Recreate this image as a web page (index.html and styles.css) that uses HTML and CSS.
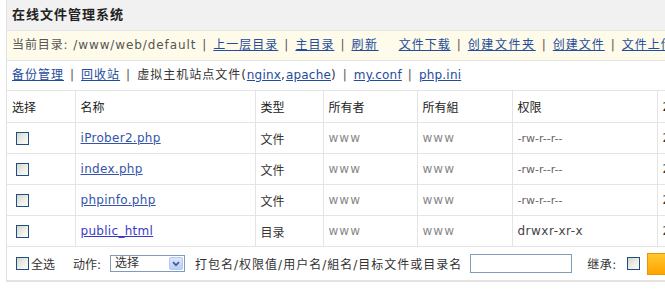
FILE: index.html
```
<!DOCTYPE html>
<html>
<head>
<meta charset="utf-8">
<link rel="stylesheet" href="styles.css">
</head>
<body>
<div class="panel">
  <div class="title">在线文件管理系统</div>
  <div class="bar bar-yellow">
    <span class="muted">当前目录: /www/web/default</span><span class="sep">|</span><a href="#">上一层目录</a><span class="sep">|</span><a href="#">主目录</a><span class="sep">|</span><a href="#" class="wide">刷新</a><a href="#" class="gap">文件下载</a><span class="sep">|</span><a href="#" class="wide">创建文件夹</a><span class="sep">|</span><a href="#">创建文件</a><span class="sep">|</span><a href="#">文件上传</a>
  </div>
  <div class="bar">
    <a href="#">备份管理</a><span class="sep">|</span><a href="#">回收站</a><span class="sep">|</span><span class="dark">虚拟主机站点文件(<a href="#" class="lat">nginx</a>,<a href="#" class="lat">apache</a>)</span><span class="sep">|</span><a href="#" class="lat">my.conf</a><span class="sep">|</span><a href="#" class="lat">php.ini</a>
  </div>
  <table class="files">
    <colgroup>
      <col class="c1"><col class="c2"><col class="c3"><col class="c4"><col class="c5"><col class="c6"><col class="c7">
    </colgroup>
    <thead>
      <tr><th>选择</th><th>名称</th><th>类型</th><th>所有者</th><th>所有組</th><th>权限</th><th>2</th></tr>
    </thead>
    <tbody>
      <tr><td><input type="checkbox" class="cb"></td><td><a href="#" class="file">iProber2.php</a></td><td>文件</td><td class="gray">www</td><td class="gray">www</td><td class="perm">-rw-r--r--</td><td class="date">2</td></tr>
      <tr><td><input type="checkbox" class="cb"></td><td><a href="#" class="file">index.php</a></td><td>文件</td><td class="gray">www</td><td class="gray">www</td><td class="perm">-rw-r--r--</td><td class="date">2</td></tr>
      <tr><td><input type="checkbox" class="cb"></td><td><a href="#" class="file">phpinfo.php</a></td><td>文件</td><td class="gray">www</td><td class="gray">www</td><td class="perm">-rw-r--r--</td><td class="date">2</td></tr>
      <tr><td><input type="checkbox" class="cb"></td><td><a href="#" class="file dir">public_html</a></td><td>目录</td><td class="gray">www</td><td class="gray">www</td><td class="perm dark">drwxr-xr-x</td><td class="date">2</td></tr>
      <tr class="foot">
        <td colspan="7">
          <div class="actions">
            <input type="checkbox" class="cb">
            <span class="all">全选</span>
            <span class="lbl">动作:</span>
            <div class="select"><span class="sel-text">选择</span><span class="sel-btn"><svg width="8" height="6" viewBox="0 0 8 6"><path d="M1 1.2 L4 4.2 L7 1.2" fill="none" stroke="#4a5f8a" stroke-width="1.8"/></svg></span></div>
            <span class="hint">打包名/权限值/用户名/組名/目标文件或目录名</span>
            <input type="text" class="field">
            <span class="inherit">继承:</span>
            <input type="checkbox" class="cb">
            <button class="go">确定执行</button>
          </div>
        </td>
      </tr>
    </tbody>
  </table>
</div>
</body>
</html>
```
FILE: styles.css
```
html, body {
  margin: 0;
  padding: 0;
  overflow: hidden;
  background: #fff;
}
body {
  font-family: "DejaVu Sans", Verdana, "Noto Sans CJK SC", sans-serif;
  font-size: 12px;
  color: #333;
}
.panel {
  margin-left: 6px;
  width: 1000px;
  border-left: 1px solid #e2e2e2;
  border-bottom: 1px solid #e2e2e2;
}
.title {
  height: 30px;
  line-height: 30px;
  padding-left: 5px;
  background: #f1f1f1;
  border-bottom: 1px solid #e6e6e6;
  font-weight: bold;
  font-size: 13px;
  letter-spacing: 1px;
  color: #222;
}
.bar {
  height: 29px;
  line-height: 29px;
  padding-left: 5px;
  border-bottom: 1px solid #e4e4e4;
  letter-spacing: 1px;
  white-space: nowrap;
}
.bar-yellow {
  background: #fffbea;
}
a {
  color: #234c9c;
  text-decoration: underline;
}
.muted {
  color: #555;
  letter-spacing: 0.9px;
}
.dark {
  color: #333;
}
.sep {
  color: #555;
  margin: 0 6px 0 6px;
}
.wide {
  letter-spacing: 1.6px;
}
.gap {
  margin-left: 20px;
}
.lat {
  letter-spacing: 0.2px;
}
.files {
  border-collapse: collapse;
  table-layout: fixed;
  width: 1000px;
}
.c1 { width: 68px; }
.c2 { width: 180px; }
.c3 { width: 68px; }
.c4 { width: 94px; }
.c5 { width: 95px; }
.c6 { width: 145px; }
.c7 { width: 350px; }
.files th, .files td {
  height: 30px;
  padding: 0 0 0 5px;
  border-right: 1px solid #e4e4e4;
  border-bottom: 1px solid #e4e4e4;
  text-align: left;
  vertical-align: middle;
  font-weight: normal;
  white-space: nowrap;
  overflow: hidden;
}
.files th {
  height: 31px;
  color: #222;
}
.file {
  color: #3455a8;
  letter-spacing: 0.3px;
}
.dir {
  color: #3a3ac8;
}
.gray {
  color: #888;
  letter-spacing: 1px;
}
.perm {
  color: #666;
  font-size: 11px;
}
.perm.dark {
  color: #444;
  font-size: 12px;
  letter-spacing: 0.5px;
}
.date {
  color: #333;
}
.cb {
  -webkit-appearance: none;
  appearance: none;
  width: 13px;
  height: 13px;
  margin: 0 0 0 4px;
  padding: 0;
  border: 1px solid #1f4f7f;
  background: linear-gradient(135deg, #d6d6d0 0%, #eeeeea 55%, #fbfbfb 100%);
  vertical-align: middle;
  display: block;
}
.foot td {
  height: 33px;
  border-right: none;
  padding-left: 5px;
}
.actions {
  display: flex;
  align-items: center;
}
.all {
  margin-left: 2px;
}
.lbl {
  margin-left: 18px;
}
.select {
  margin-left: 9px;
  width: 73px;
  height: 15px;
  border: 1px solid #7f9db9;
  background: #fff;
  display: flex;
  align-items: center;
  justify-content: space-between;
}
.sel-text {
  padding-left: 4px;
  line-height: 15px;
}
.sel-btn {
  width: 14px;
  height: 13px;
  margin-right: 1px;
  border: 1px solid #b6c9f5;
  border-radius: 2px;
  box-sizing: border-box;
  background: linear-gradient(180deg, #dbe6fd 0%, #b9cdf8 100%);
  display: flex;
  align-items: center;
  justify-content: center;
}
.hint {
  margin-left: 10px;
  letter-spacing: 1px;
}
.field {
  margin-left: 8px;
  width: 100px;
  height: 17px;
  padding: 0;
  border: 1px solid #7f9db9;
  box-sizing: content-box;
}
.inherit {
  margin-left: 15px;
  letter-spacing: 0.5px;
}
.actions .inherit + .cb {
  margin-left: 10px;
}
.go {
  margin-left: 7px;
  height: 22px;
  width: 60px;
  padding: 0 0 0 30px;
  border: 1px solid #e39a00;
  background: linear-gradient(180deg, #ffc72e 0%, #ffa400 100%);
  color: #fff;
  font-family: inherit;
  font-size: 12px;
}
```
